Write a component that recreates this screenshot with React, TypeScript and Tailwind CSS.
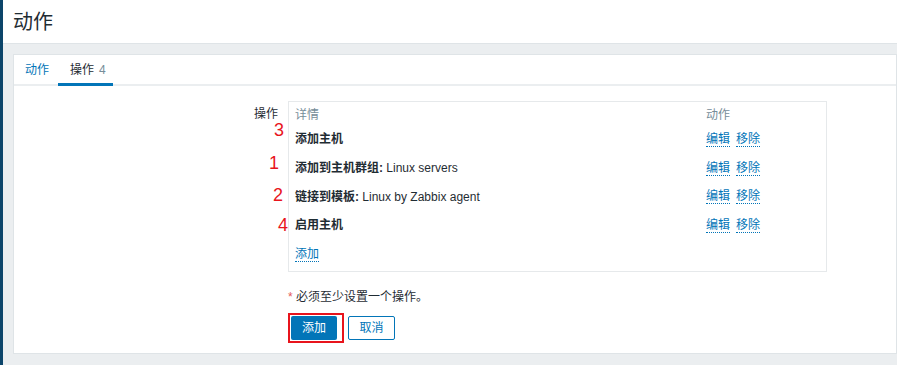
import React from "react";

const rows = [
  { label: "添加主机", value: "" },
  { label: "添加到主机群组:", value: " Linux servers" },
  { label: "链接到模板:", value: " Linux by Zabbix agent" },
  { label: "启用主机", value: "" },
];

function Link({ children }: { children: React.ReactNode }) {
  return (
    <span className="text-[#0275b8] border-b border-dotted border-[#0275b8] leading-[14px]">
      {children}
    </span>
  );
}

export default function App() {
  const font = { fontFamily: '"Liberation Sans", Arial, "Noto Sans CJK SC", sans-serif' };
  return (
    <div className="w-[897px] h-[365px] flex bg-[#ebeef0] text-[12px] text-[#1f2c33] overflow-hidden" style={font}>
      <div className="w-[3px] h-full bg-[#0c456a]" />
      <div className="flex-1 flex flex-col">
        <div className="h-[44px] bg-white border-b border-[#dfe4e7] flex items-center pl-[10px]">
          <h1 className="text-[20px] leading-[24px] font-normal text-[#1f2c33]">动作</h1>
        </div>
        <div className="pt-[10px] pl-[10px]">
          <div className="h-[300px] bg-white border border-[#dfe4e7] border-r-[#dfe4e7]">
            <div className="h-[31px] border-b-2 border-[#ebeef0] flex pl-[10px]">
              <div className="px-[1px] flex items-center h-full text-[#0275b8] mr-[10px]">动作</div>
              <div className="px-[10px] flex items-end h-full">
                <div className="h-full flex flex-col">
                  <div className="flex-1 flex items-center">
                    操作 <span className="ml-[5px] text-[#768d99]">4</span>
                  </div>
                </div>
              </div>
            </div>
            <div className="relative -mt-[2px] h-0">
              <div className="absolute left-[44px] top-0 w-[55px] h-[2px] bg-[#0275b8]" />
              <div className="absolute left-[44px] -top-[1px] w-[55px] h-[1px] bg-[#0275b8]" />
            </div>
            <div className="pt-[17px] flex relative">
              <div className="w-[264px] text-right pt-[5px] leading-[16px]">操作</div>
              <div className="ml-[10px]">
                <div className="w-[539px] h-[171px] border border-[#e6e9eb] px-[6px] pt-[3px]">
                  <div className="h-[20px] flex items-center text-[#768d99]">
                    <div className="w-[411px]">详情</div>
                    <div>动作</div>
                  </div>
                  {rows.map((r) => (
                    <div key={r.label} className="h-[28.7px] flex items-center">
                      <div className="w-[411px]">
                        <span className="font-bold">{r.label}</span>
                        {r.value}
                      </div>
                      <div className="flex gap-[6px]">
                        <Link>编辑</Link>
                        <Link>移除</Link>
                      </div>
                    </div>
                  ))}
                  <div className="h-[28.7px] flex items-center">
                    <Link>添加</Link>
                  </div>
                </div>
                <div className="mt-[18px] leading-[14px]">
                  <span className="text-[#e45959]">*</span> 必须至少设置一个操作。
                </div>
                <div className="mt-[9px] flex items-center gap-[4px]">
                  <div className="border-[2px] border-[#e8141c] p-[1px] pr-[5px] bg-white">
                    <button className="h-[24px] w-[46px] bg-[#0275b8] text-white rounded-[2px] text-[12px]">添加</button>
                  </div>
                  <button className="h-[24px] w-[47px] border border-[#0275b8] text-[#0275b8] rounded-[2px] text-[12px] bg-white">取消</button>
                </div>
              </div>
              <span className="absolute left-[260px] top-[37px] text-[18px] leading-[18px] text-[#e8141c]">3</span>
              <span className="absolute left-[255px] top-[70px] text-[18px] leading-[18px] text-[#e8141c]">1</span>
              <span className="absolute left-[259px] top-[102px] text-[18px] leading-[18px] text-[#e8141c]">2</span>
              <span className="absolute left-[264px] top-[132px] text-[18px] leading-[18px] text-[#e8141c]">4</span>
            </div>
          </div>
        </div>
      </div>
    </div>
  );
}
